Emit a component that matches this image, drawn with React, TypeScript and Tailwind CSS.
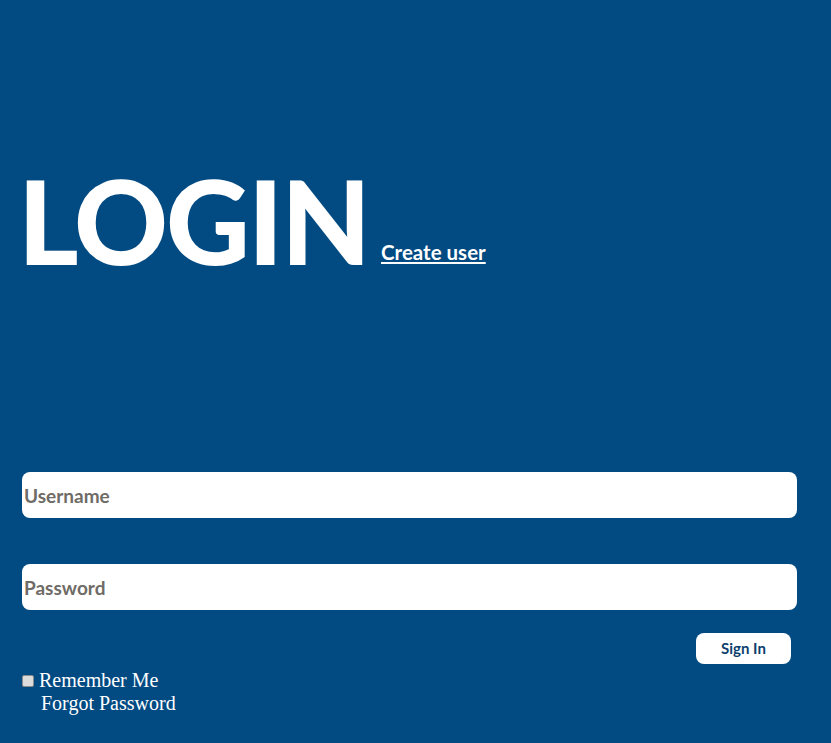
import React from 'react'

function App() {
    return (
        <div className="min-h-[743px] bg-[#024a82] px-[22px] pt-[163px] pb-8 font-['Lato',sans-serif]">
            <div className="flex items-end gap-[12px]">
                <h1 className="-ml-[4px] text-[116px] font-black leading-none tracking-[-2px] text-white">LOGIN</h1>
                <a href="#" className="mb-[11px] text-[20.5px] font-bold text-white underline">Create user</a>
            </div>

            <form className="mt-[193px] w-[775px]" onSubmit={(e) => e.preventDefault()}>
                <input
                    type="text"
                    placeholder="Username"
                    className="block h-[46px] w-full rounded-lg bg-white px-[2px] text-[19px] font-bold text-gray-800 outline-none placeholder:text-[#6f6b66]"
                />
                <input
                    type="password"
                    placeholder="Password"
                    className="mt-[46px] block h-[46px] w-full rounded-lg bg-white px-[2px] text-[19px] font-bold text-gray-800 outline-none placeholder:text-[#6f6b66]"
                />
                <div className="mt-[23px] flex justify-end pr-[6px]">
                    <button type="submit" className="h-[31px] w-[95px] rounded-lg bg-white text-[15px] font-bold text-[#0d3f6e]">Sign In</button>
                </div>
            </form>

            <div className="mt-[5px] font-['Liberation_Serif',serif] text-[20px] leading-[23px] text-white">
                <label className="flex items-center gap-[5px]">
                    <input type="checkbox" className="m-0 h-[12px] w-[12px] appearance-none rounded-[2px] border border-[#8a8a8a] bg-[#dcdcdc]" />
                    <span>Remember Me</span>
                </label>
                <div className="pl-[19px]">Forgot Password</div>
            </div>
        </div>
    )
}

export default App
